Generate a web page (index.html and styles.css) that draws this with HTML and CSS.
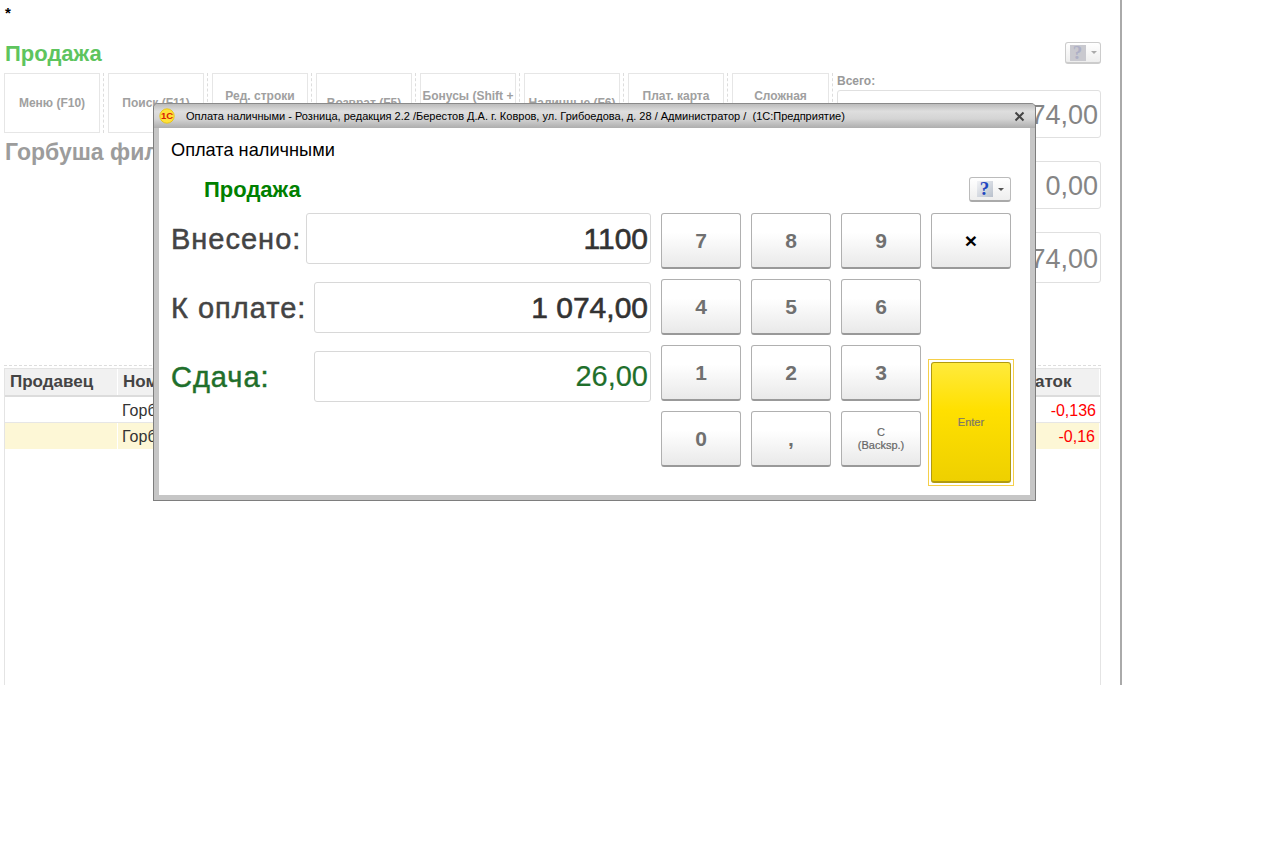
FILE: index.html
```html
<!DOCTYPE html>
<html lang="ru">
<head>
<meta charset="utf-8">
<title>Оплата наличными</title>
<link rel="stylesheet" href="styles.css">
</head>
<body>
<div class="page">
  <div class="star">*</div>
  <div class="head">
    <div class="head-title">Продажа</div>
    <div class="help help-dim"><span class="help-icon">?</span><span class="caret"></span></div>
  </div>
  <div class="main">
    <div class="main-left">
      <div class="toolbar">
        <div class="tool">Меню (F10)</div>
        <div class="tool">Поиск (F11)</div>
        <div class="tool">Ред. строки<br>(F4)</div>
        <div class="tool">Возврат (F5)</div>
        <div class="tool">Бонусы (Shift +<br>F5)</div>
        <div class="tool">Наличные (F6)</div>
        <div class="tool">Плат. карта<br>(F7)</div>
        <div class="tool">Сложная<br>оплата</div>
      </div>
      <div class="item-name">Горбуша филе</div>
    </div>
    <div class="totals">
      <div class="total-label">Всего:</div>
      <div class="total-field">1 074,00</div>
      <div class="total-field total-gap">0,00</div>
      <div class="total-field total-gap total-tall">1 074,00</div>
    </div>
  </div>
  <div class="table">
    <div class="row row-head">
      <div class="cell">Продавец</div>
      <div class="cell">Номенклатура</div>
      <div class="cell">Остаток</div>
    </div>
    <div class="row row-first">
      <div class="cell"></div>
      <div class="cell">Горбуша филе</div>
      <div class="cell cell-num">-0,136</div>
    </div>
    <div class="row row-current">
      <div class="cell"></div>
      <div class="cell">Горбуша филе</div>
      <div class="cell cell-num">-0,16</div>
    </div>
  </div>
</div>

<div class="window">
  <div class="titlebar">
    <svg class="logo" width="16" height="16" viewBox="0 0 16 16">
      <circle cx="8" cy="8" r="7.2" fill="#ffe23a" stroke="#e8c000" stroke-width="0.8"/>
      <text x="8" y="11" text-anchor="middle" class="logo-text">1С</text>
    </svg>
    <div class="window-title">Оплата наличными - Розница, редакция 2.2 /Берестов Д.А. г. Ковров, ул. Грибоедова, д. 28 / Администратор / &nbsp;(1С:Предприятие)</div>
    <svg class="close" width="11" height="11" viewBox="0 0 11 11">
      <path d="M1.5 1.5 L9.5 9.5 M9.5 1.5 L1.5 9.5" stroke="#444" stroke-width="2" fill="none"/>
    </svg>
  </div>
  <div class="window-body">
    <div class="form-title">Оплата наличными</div>
    <div class="sale-row">
      <div class="sale-title">Продажа</div>
      <div class="help help-active"><span class="help-icon">?</span><span class="caret"></span></div>
    </div>
    <div class="pay">
      <div class="fields">
        <div class="pay-row">
          <div class="pay-label label-short">Внесено:</div>
          <div class="pay-field field-strong">1100</div>
        </div>
        <div class="pay-row">
          <div class="pay-label">К оплате:</div>
          <div class="pay-field field-strong">1 074,00</div>
        </div>
        <div class="pay-row">
          <div class="pay-label label-green">Сдача:</div>
          <div class="pay-field field-green">26,00</div>
        </div>
      </div>
      <div class="keypad">
        <div class="key">7</div>
        <div class="key">8</div>
        <div class="key">9</div>
        <div class="key key-x">×</div>
        <div class="key">4</div>
        <div class="key">5</div>
        <div class="key">6</div>
        <div class="key-blank"></div>
        <div class="key">1</div>
        <div class="key">2</div>
        <div class="key">3</div>
        <div class="enter-wrap"><div class="enter">Enter</div></div>
        <div class="key">0</div>
        <div class="key">,</div>
        <div class="key key-small">С<br>(Backsp.)</div>
      </div>
    </div>
  </div>
</div>
</body>
</html>
```
FILE: styles.css
```css
* { box-sizing: border-box; }
html, body { margin: 0; padding: 0; background: #fff; }
body { font-family: "Liberation Sans", Arial, sans-serif; color: #333; height: 841px; overflow: hidden; position: relative; }

.page { width: 1122px; height: 685px; border-right: 2px solid #aaa; padding: 0 19px 0 4px; overflow: hidden; }
.star { height: 42px; font-size: 15px; font-weight: bold; line-height: 16px; padding: 5px 0 0 1px; color: #000; }
.head { display: flex; justify-content: space-between; align-items: center; height: 22px; }
.head-title { font-size: 22px; font-weight: bold; color: #5ec45e; position: relative; top: 1px; left: 1px; }

.help { display: flex; align-items: center; justify-content: center; gap: 5px; border: 1px solid #ccc; border-bottom-width: 2px; border-radius: 3px; background: linear-gradient(#fff, #eee); }
.help-dim { width: 36px; height: 22px; }
.help-dim .help-icon { background: #c9c9cf; color: #aeb0c6; }
.help-dim .caret { border-top-color: #aaa; }
.help-active { width: 42px; height: 25px; border-color: #bbb; border-bottom-color: #aaa; }
.help-active .help-icon { background: linear-gradient(135deg, #f2f3f6, #b8c0cc); color: #1f47c0; }
.help-active .caret { border-top-color: #555; }
.help-icon { width: 16px; height: 16px; font: bold 19px/16px "Liberation Serif", serif; text-align: center; }
.caret { width: 0; height: 0; border: 3px solid transparent; border-top: 3px solid #555; border-bottom: 0; }

.main { display: flex; gap: 8px; margin-top: 9px; height: 210px; }
.main-left { width: 825px; }
.toolbar { display: flex; gap: 8px; }
.tool { position: relative; flex: none; width: 96px; height: 60px; padding: 0; border: 1px solid #e6e6e6; display: flex; align-items: center; justify-content: center; text-align: center; font-size: 12px; line-height: 14px; font-weight: bold; color: #a0a0a0; }
.tool::after { content: ""; position: absolute; top: -1px; bottom: -1px; right: -5px; border-right: 1px dashed #ddd; }
.tool:last-child { width: 97px; }
.item-name { margin-top: 6px; font-size: 23px; line-height: 26px; font-weight: bold; color: #9c9c9c; padding-left: 1px; }

.totals { width: 264px; display: flex; flex-direction: column; }
.total-label { height: 17px; padding-top: 1px; font-size: 12px; line-height: 14px; font-weight: bold; color: #999; }
.total-field { height: 48px; flex: none; border: 1px solid #e0e0e0; border-radius: 3px; display: flex; align-items: center; justify-content: flex-end; padding: 3px 2px 0 0; font-size: 27px; color: #858585; }
.total-gap { margin-top: 23px; }
.total-tall { height: 51px; }

.table { position: relative; margin-top: 82px; height: 320px; border-top: 1px dashed #ddd; padding-top: 3px; }
.table::after { content: ""; position: absolute; left: 0; right: 0; top: 2px; bottom: 0; border: 1px solid #e4e4e4; border-bottom: 0; pointer-events: none; }
.row { display: grid; grid-template-columns: 113px 1fr 101px; padding: 0 1px; }
.cell { font-size: 16px; line-height: 24px; padding: 2px 4px 0; white-space: nowrap; }
.row-head { height: 28px; border-bottom: 2px solid #dcdcdc; }
.row-head .cell { background: #f1f1f1; font-size: 17px; font-weight: bold; color: #444; border-right: 1px solid #fff; padding: 0 5px; height: 26px; line-height: 26px; }
.row-first { height: 26px; border-bottom: 1px solid #e6e6e6; }
.row-current { height: 26px; border-bottom: 2px solid #e6e6e6; }
.row-current .cell { background: #fdf7d6; border-right: 1px solid #fff; }
.cell-num { text-align: right; color: #f00; }

.window { position: absolute; left: 153px; top: 103px; width: 883px; height: 398px; border: 1px solid #7e7e7e; border-top-color: #8a8a8a; border-radius: 5px 5px 0 0; background: #c6c6c6; padding: 0 5px 5px; display: flex; flex-direction: column; }
.titlebar { flex: none; height: 24px; margin: 0 -5px; padding: 0 10px 0 5px; display: flex; align-items: center; background: linear-gradient(#bcbcbc, #dedede 30%, #d4d4d4 62%, #aeaeae); border-radius: 4px 4px 0 0; }
.logo { flex: none; }
.logo-text { font: bold 9.5px "Liberation Sans", sans-serif; fill: #d81e05; }
.window-title { flex: 1; margin-left: 11px; font-size: 11.03px; color: #000; white-space: nowrap; }
.close { flex: none; }

.window-body { flex: 1; background: #fff; padding: 0 19px 0 12px; }
.form-title { height: 44px; font-size: 18.2px; line-height: 44px; color: #000; }
.sale-row { display: flex; justify-content: space-between; align-items: center; height: 25px; margin-top: 5px; padding-left: 33px; }
.sale-title { font-size: 22px; font-weight: bold; color: #008000; }
.pay { display: flex; gap: 10px; margin-top: 11px; }
.fields { width: 480px; display: flex; flex-direction: column; gap: 18px; }
.pay-row { display: flex; height: 51px; }
.pay-label { flex: none; width: 143px; font-size: 29px; letter-spacing: 1px; line-height: 53px; color: #444; white-space: nowrap; -webkit-text-stroke: 0.5px currentColor; }
.label-short { width: 135px; }
.label-green { color: #1f6f2b; }
.pay-field { flex: 1; border: 1px solid #d8d8d8; border-radius: 3px; text-align: right; padding-right: 2px; font-size: 30px; line-height: 49px; }
.field-strong { color: #333; -webkit-text-stroke: 0.6px currentColor; }
.field-green { color: #1f6f2b; font-size: 29px; -webkit-text-stroke: 0.2px currentColor; }

.keypad { display: grid; grid-template-columns: repeat(4, 80px); grid-auto-rows: 56px; gap: 10px; }
.key { display: flex; align-items: center; justify-content: center; padding-top: 1px; text-align: center; border: 1px solid #b0b0b0; border-bottom: 2px solid #999; border-radius: 3px; background: linear-gradient(#fff 35%, #e9e9e9); font-size: 21px; font-weight: bold; color: #707070; }
.key-x { color: #000; }
.key-small { font-size: 11px; line-height: 13px; font-weight: normal; color: #666; -webkit-text-stroke: 0.2px currentColor; }
.enter-wrap { grid-column: 4; grid-row: 3 / 5; margin: 14px -3px 0; height: 127px; padding: 2px; border: 1px solid #f5cf4a; }
.enter { height: 100%; display: flex; align-items: center; justify-content: center; border: 1px solid #b09a10; border-bottom-width: 2px; border-radius: 3px; background: linear-gradient(#ffea3c, #ffe000 40%, #eed000); font-size: 11px; color: #7c7868; -webkit-text-stroke: 0.2px currentColor; }
```
